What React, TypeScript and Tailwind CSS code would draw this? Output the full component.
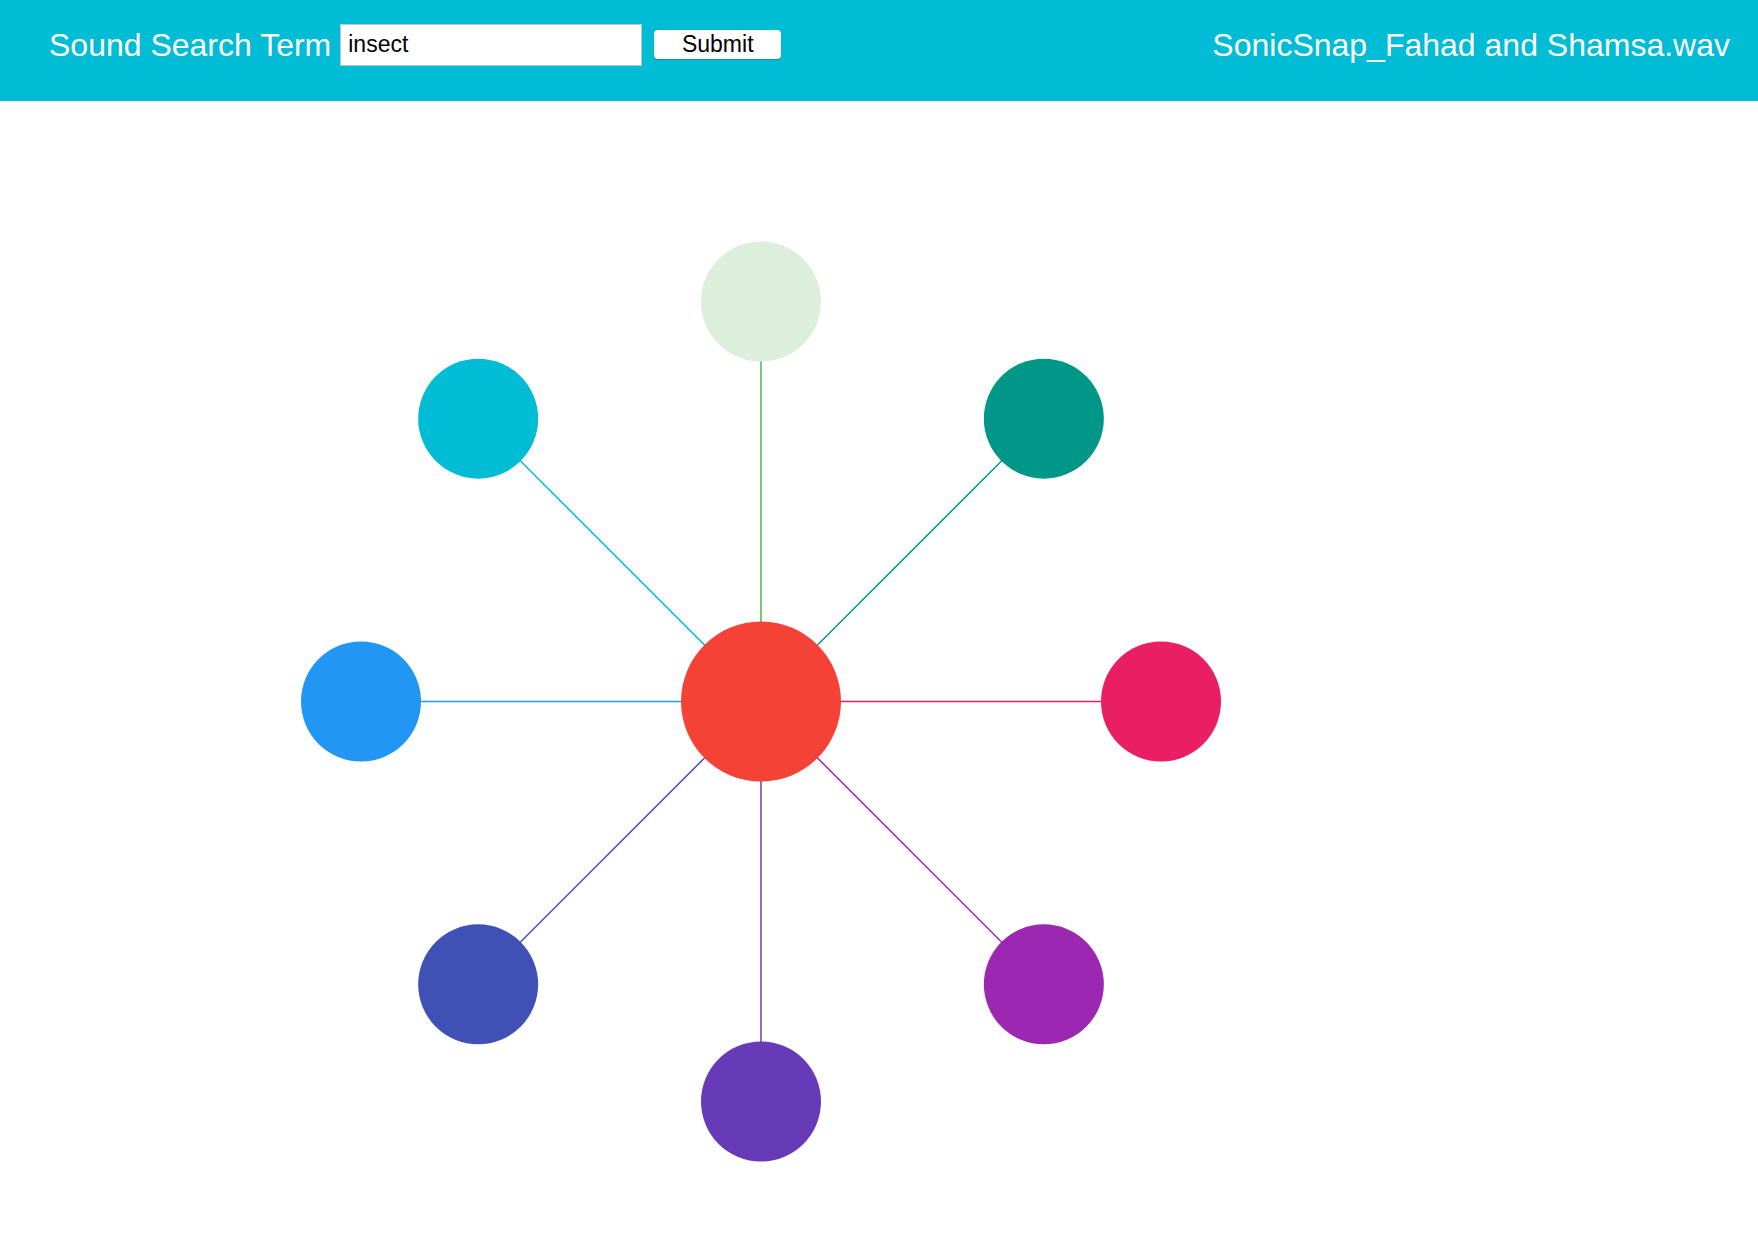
import React from "react";

const CX = 761;
const CY = 600.5;
const R = 400;

const nodes = [
  { angle: -90, fill: "#dcefdd", stroke: "#4caf50" },
  { angle: -45, fill: "#009688", stroke: "#009688" },
  { angle: 0, fill: "#e91e63", stroke: "#e91e63" },
  { angle: 45, fill: "#9c27b0", stroke: "#9c27b0" },
  { angle: 90, fill: "#673ab7", stroke: "#673ab7" },
  { angle: 135, fill: "#3f51b5", stroke: "#3f51b5" },
  { angle: 180, fill: "#2196f3", stroke: "#2196f3" },
  { angle: -135, fill: "#00bcd4", stroke: "#00bcd4" },
];

export default function App() {
  const pts = nodes.map((n) => {
    const a = (n.angle * Math.PI) / 180;
    return { ...n, x: CX + R * Math.cos(a), y: CY + R * Math.sin(a) };
  });
  return (
    <div className="w-full min-h-screen bg-white" style={{ fontFamily: '"Liberation Sans", Arial, sans-serif' }}>
      <header className="h-[101px] bg-[#00bcd4]">
        <div className="flex h-[89px] items-center justify-between pl-[49px] pr-[28px]">
          <div className="flex items-center">
            <span className="text-[32px] leading-none text-white">Sound Search Term</span>
            <input
              defaultValue="insect"
              className="ml-[9px] h-[42px] w-[302px] border border-[#b9c6ca] bg-white px-[7px] text-[23px] text-black outline-none"
            />
            <button className="ml-[12px] h-[29px] w-[127px] rounded-[4px] bg-white text-[23px] leading-none text-black shadow-[0_1px_1px_rgba(0,0,0,0.2)]">
              Submit
            </button>
          </div>
          <span className="text-[32px] leading-none text-white">SonicSnap_Fahad and Shamsa.wav</span>
        </div>
      </header>
      <svg width="1758" height="1145" className="block">
        {pts.map((p, i) => (
          <line key={"l" + i} x1={CX} y1={CY} x2={p.x} y2={p.y} stroke={p.stroke} strokeWidth={1.5} />
        ))}
        {pts.map((p, i) => (
          <circle key={"c" + i} cx={p.x} cy={p.y} r={60} fill={p.fill} />
        ))}
        <circle cx={CX} cy={CY} r={80} fill="#f44336" />
      </svg>
    </div>
  );
}
